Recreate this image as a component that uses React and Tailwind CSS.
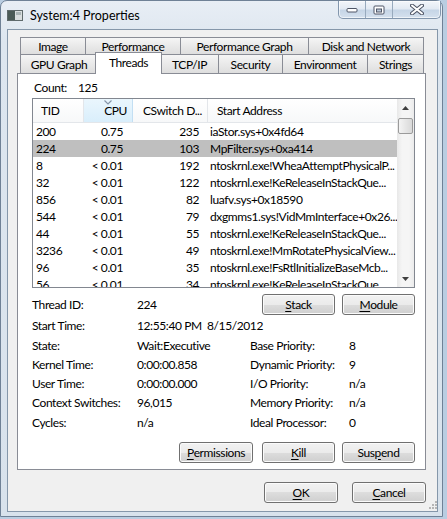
import React from 'react';

const FONT = "font-['Lato','Noto_Sans',sans-serif]";

const tabsBack = [
  { label: 'Image', w: 'w-[65px]' },
  { label: 'Performance', w: 'w-[95px]' },
  { label: 'Performance Graph', w: 'w-[128px]' },
  { label: 'Disk and Network', w: 'w-[116px] border-r' },
];

const tabsFront = [
  { label: 'GPU Graph', w: 'w-[77px]' },
  { label: 'Threads', w: 'w-[67px]', active: true },
  { label: 'TCP/IP', w: 'w-[58px]' },
  { label: 'Security', w: 'w-[64px]' },
  { label: 'Environment', w: 'w-[85px]' },
  { label: 'Strings', w: 'w-[57px] border-r' },
];

const threads = [
  { tid: '200', cpu: '0.75', cs: '235', addr: 'iaStor.sys+0x4fd64' },
  { tid: '224', cpu: '0.75', cs: '103', addr: 'MpFilter.sys+0xa414', selected: true },
  { tid: '8', cpu: '< 0.01', cs: '192', addr: 'ntoskrnl.exe!WheaAttemptPhysicalP...' },
  { tid: '32', cpu: '< 0.01', cs: '122', addr: 'ntoskrnl.exe!KeReleaseInStackQue...' },
  { tid: '856', cpu: '< 0.01', cs: '82', addr: 'luafv.sys+0x18590' },
  { tid: '544', cpu: '< 0.01', cs: '79', addr: 'dxgmms1.sys!VidMmInterface+0x26...' },
  { tid: '44', cpu: '< 0.01', cs: '55', addr: 'ntoskrnl.exe!KeReleaseInStackQue...' },
  { tid: '3236', cpu: '< 0.01', cs: '49', addr: 'ntoskrnl.exe!MmRotatePhysicalView...' },
  { tid: '96', cpu: '< 0.01', cs: '35', addr: 'ntoskrnl.exe!FsRtlInitializeBaseMcb...' },
  { tid: '56', cpu: '< 0.01', cs: '34', addr: 'ntoskrnl.exe!KeReleaseInStackQue...' },
];

const details = [
  { label: 'State:', value: 'Wait:Executive', label2: 'Base Priority:', value2: '8', h: 'h-[20px]' },
  { label: 'Kernel Time:', value: '0:00:00.858', label2: 'Dynamic Priority:', value2: '9', h: 'h-[19px]' },
  { label: 'User Time:', value: '0:00:00.000', label2: 'I/O Priority:', value2: 'n/a', h: 'h-[19px]' },
  { label: 'Context Switches:', value: '96,015', label2: 'Memory Priority:', value2: 'n/a', h: 'h-[19px]' },
  { label: 'Cycles:', value: 'n/a', label2: 'Ideal Processor:', value2: '0', h: 'h-[21px]' },
];

function WinButton({ children, className = '' }) {
  return (
    <div
      className={`flex h-[21px] items-center justify-center rounded-[3px] border border-[#707070] bg-[linear-gradient(#f2f2f2_0%,#ebebeb_50%,#dddddd_50%,#cfcfcf_100%)] shadow-[inset_0_0_0_1px_#fbfbfb] pb-[1px] ${className}`}
    >
      {children}
    </div>
  );
}

const U = ({ children }) => <span className="underline underline-offset-[2px]">{children}</span>;

function TitleBar() {
  return (
    <div className="flex h-[28px] items-start tracking-normal">
      <svg width="16" height="11" viewBox="0 0 16 11" className="ml-[6px] mt-[9px]">
        <rect x="0.5" y="0.5" width="15" height="10" fill="#d9dedf" stroke="#5f6a6c" />
        <rect x="1" y="1" width="7" height="9" fill="#4b5b57" />
        <rect x="9" y="2" width="5" height="3" fill="#aab5b6" />
      </svg>
      <div className="ml-[7px] mt-[7px] text-[12.5px] leading-[16px] text-black">System:4 Properties</div>
      <div className="ml-auto mr-[1px] flex h-[18px] overflow-hidden rounded-b-[5px] border border-t-0 border-[#8296ad] bg-[linear-gradient(180deg,#f3f6fa_0%,#e3eaf3_45%,#c6d5e6_55%,#d5e1ee_100%)] shadow-[inset_0_0_0_1px_rgba(255,255,255,0.6)]">
        <div className="flex w-[27px] items-center justify-center border-r border-[#98aabd]">
          <svg width="12" height="6" viewBox="0 0 12 6">
            <rect x="1" y="1.5" width="10" height="3.5" rx="1" fill="#ffffff" stroke="#4e5566" />
          </svg>
        </div>
        <div className="flex w-[27px] items-center justify-center border-r border-[#98aabd]">
          <svg width="12" height="10" viewBox="0 0 12 10">
            <rect x="1" y="1" width="10" height="8" rx="1" fill="#ffffff" stroke="#4e5566" />
            <rect x="3.5" y="4" width="5" height="3" fill="#b9c7d7" stroke="#4e5566" />
          </svg>
        </div>
        <div className="flex w-[47px] items-center justify-center">
          <svg width="14" height="11" viewBox="0 0 14 11">
            <path d="M2 1.5 L12 9.5 M12 1.5 L2 9.5" stroke="#4e5566" strokeWidth="4" strokeLinecap="round" />
            <path d="M2 1.5 L12 9.5 M12 1.5 L2 9.5" stroke="#ffffff" strokeWidth="2" strokeLinecap="round" />
          </svg>
        </div>
      </div>
    </div>
  );
}

function Tabs() {
  return (
    <div className="ml-[3px] w-[404px]">
      <div className="flex h-[17px]">
        {tabsBack.map((t) => (
          <div
            key={t.label}
            className={`${t.w} flex items-center justify-center whitespace-nowrap border-l border-t border-[#898c95] bg-[linear-gradient(180deg,#f5f5f5,#dedede)] leading-[15px]`}
          >
            {t.label}
          </div>
        ))}
      </div>
      <div className="flex h-[19px]">
        {tabsFront.map((t) =>
          t.active ? (
            <div
              key={t.label}
              className={`${t.w} relative z-10 -mx-[2px] -mt-[2px] flex h-[22px] items-center justify-center whitespace-nowrap border-x border-t border-[#898c95] bg-white pb-[2px] leading-[15px]`}
            >
              {t.label}
            </div>
          ) : (
            <div
              key={t.label}
              className={`${t.w} flex items-center justify-center whitespace-nowrap border-l border-t border-[#898c95] bg-[linear-gradient(180deg,#f5f5f5,#dedede)] leading-[15px]`}
            >
              {t.label}
            </div>
          )
        )}
      </div>
    </div>
  );
}

function ListView() {
  return (
    <div className="ml-[14px] mt-[3px] flex h-[190px] w-[383px] border border-[#828790] bg-white">
      <div className="w-[364px] overflow-hidden">
        <div className="flex h-[24px] border-b border-[#e3e6ea] bg-[linear-gradient(180deg,#ffffff,#f7f8f9)] leading-[15px]">
          <div className="flex w-[51px] items-center border-r border-[#e3e6ea] pl-[8px]">TID</div>
          <div className="relative flex w-[49px] items-center justify-end border-r border-[#c3dff3] bg-[linear-gradient(180deg,#eaf6fd,#d9eefb)] pr-[5px]">
            <svg width="8" height="5" viewBox="0 0 8 5" className="absolute left-[20px] top-[1px]">
              <path d="M0.5 0.5 L4 4 L7.5 0.5" fill="none" stroke="#8696a8" strokeWidth="1.2" />
            </svg>
            CPU
          </div>
          <div className="flex w-[75px] items-center whitespace-nowrap border-r border-[#e3e6ea] pl-[10px]">CSwitch D...</div>
          <div className="flex flex-1 items-center whitespace-nowrap pl-[9px]">Start Address</div>
        </div>
        {threads.map((r) => (
          <div
            key={r.tid}
            className={`grid h-[17px] grid-cols-[51px_49px_75px_189px] items-center leading-[15px] ${r.selected ? 'bg-[#bfbfbf]' : ''}`}
          >
            <div className="pl-[3px]">{r.tid}</div>
            <div className="whitespace-nowrap pr-[10px] text-right">{r.cpu}</div>
            <div className="pr-[9px] text-right">{r.cs}</div>
            <div className="overflow-hidden whitespace-nowrap pl-[2px]">{r.addr}</div>
          </div>
        ))}
      </div>
      <div className="flex w-[17px] flex-col bg-[linear-gradient(90deg,#e8e8e8,#f5f5f5_30%,#f5f5f5_70%,#ebebeb)]">
        <div className="flex h-[17px] items-center justify-center">
          <svg width="7" height="4" viewBox="0 0 7 4">
            <path d="M0 4 L3.5 0 L7 4 Z" fill="#3f3f3f" />
          </svg>
        </div>
        <div className="mx-[1px] mt-[2px] h-[16px] rounded-[2px] border border-[#9b9b9b] bg-[linear-gradient(90deg,#f4f4f4,#e6e6e6_50%,#d9d9d9)]" />
        <div className="flex-1" />
        <div className="flex h-[17px] items-center justify-center">
          <svg width="7" height="4" viewBox="0 0 7 4">
            <path d="M0 0 L3.5 4 L7 0 Z" fill="#3f3f3f" />
          </svg>
        </div>
      </div>
    </div>
  );
}

function Details() {
  return (
    <div className="ml-[14px] mt-[6px] w-[383px] leading-[15px]">
      <div className="flex h-[21px] items-center">
        <div className="w-[105px]">Thread ID:</div>
        <div>224</div>
        <WinButton className="ml-auto w-[73px]">
          <U>S</U>tack
        </WinButton>
        <WinButton className="ml-[7px] w-[73px]">
          <U>M</U>odule
        </WinButton>
      </div>
      <div className="flex h-[20px] items-center">
        <div className="w-[105px]">Start Time:</div>
        <div className="w-[70px] whitespace-nowrap">12:55:40 PM</div>
        <div>8/15/2012</div>
      </div>
      {details.map((d) => (
        <div key={d.label} className={`flex ${d.h} items-center`}>
          <div className="w-[105px] whitespace-nowrap">{d.label}</div>
          <div className="w-[113px]">{d.value}</div>
          <div className="w-[99px] whitespace-nowrap">{d.label2}</div>
          <div>{d.value2}</div>
        </div>
      ))}
      <div className="mt-[9px] flex justify-end">
        <WinButton className="w-[74px]">
          <U>P</U>ermissions
        </WinButton>
        <WinButton className="ml-[9px] w-[73px]">
          <U>K</U>ill
        </WinButton>
        <WinButton className="ml-[7px] w-[73px]">
          Sus<U>p</U>end
        </WinButton>
      </div>
    </div>
  );
}

export default function App() {
  return (
    <div className={`h-[519px] w-[447px] overflow-hidden bg-[#b9cde1] ${FONT} text-[12px] tracking-[-0.4px] text-black`}>
      <div className="flex h-[517px] w-[443px] flex-col rounded-t-[7px] border border-[#6f8196] bg-[linear-gradient(180deg,#e8eef5_0%,#dde6ef_8%,#d8e2ec_100%)]">
        <TitleBar />
        <div className="relative ml-[6px] mr-[4px] h-[483px] border border-[#8597aa] bg-[#f0f0f0] pl-[9px] pt-[7px]">
          <Tabs />
          <div className="h-[397px] w-[409px] border border-[#898c95] bg-white">
            <div className="ml-[16px] mt-[5px] flex h-[16px] items-center leading-[15px]">
              <div className="w-[44px]">Count:</div>
              <div>125</div>
            </div>
            <ListView />
            <Details />
          </div>
          <div className="mt-[12px] flex w-[409px] justify-end leading-[15px]">
            <WinButton className="w-[74px]">
              <U>O</U>K
            </WinButton>
            <WinButton className="ml-[14px] w-[74px]">
              <U>C</U>ancel
            </WinButton>
          </div>
          <svg width="8" height="8" viewBox="0 0 8 8" className="absolute bottom-[2px] right-[0px]">
            <rect x="6" y="0" width="2" height="2" fill="#b5b5b5" />
            <rect x="3" y="3" width="2" height="2" fill="#b5b5b5" />
            <rect x="6" y="3" width="2" height="2" fill="#b5b5b5" />
            <rect x="0" y="6" width="2" height="2" fill="#b5b5b5" />
            <rect x="3" y="6" width="2" height="2" fill="#b5b5b5" />
            <rect x="6" y="6" width="2" height="2" fill="#b5b5b5" />
          </svg>
        </div>
      </div>
    </div>
  );
}
